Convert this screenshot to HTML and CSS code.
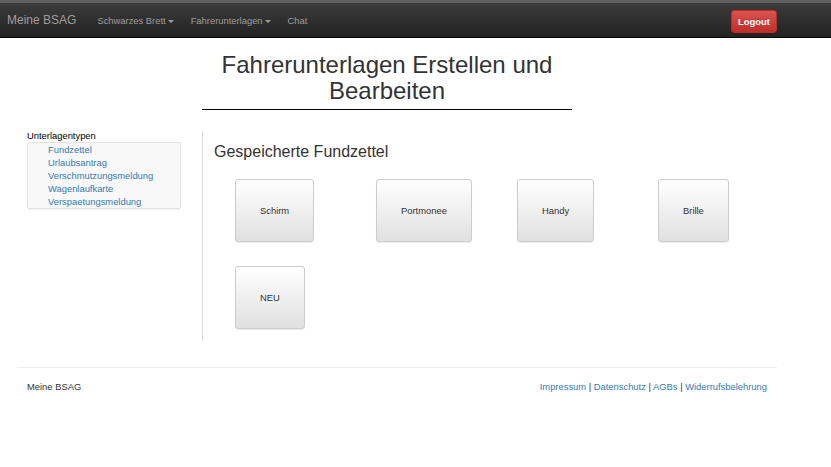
FILE: index.html
```html
<!DOCTYPE html>
<html lang="de">
<head>
<meta charset="utf-8">
<title>Fahrerunterlagen</title>
<link rel="stylesheet" href="styles.css">
</head>
<body>
<div class="topstrip"></div>
<nav class="navbar">
  <a class="brand" href="#">Meine BSAG</a>
  <ul class="nav">
    <li><a href="#">Schwarzes Brett<span class="caret"></span></a></li>
    <li><a href="#">Fahrerunterlagen<span class="caret"></span></a></li>
    <li><a href="#">Chat</a></li>
  </ul>
  <button class="logout">Logout</button>
</nav>
<div class="container">
  <div class="title-wrap">
    <h1 class="title">Fahrerunterlagen Erstellen und Bearbeiten</h1>
  </div>
  <div class="row">
    <aside class="sidebar">
      <div class="side-label">Unterlagentypen</div>
      <ul class="side-list">
        <li><a href="#">Fundzettel</a></li>
        <li><a href="#">Urlaubsantrag</a></li>
        <li><a href="#">Verschmutzungsmeldung</a></li>
        <li><a href="#">Wagenlaufkarte</a></li>
        <li><a href="#">Verspaetungsmeldung</a></li>
      </ul>
    </aside>
    <main class="main">
      <h3 class="subtitle">Gespeicherte Fundzettel</h3>
      <div class="grid">
        <div class="cell"><button class="item">Schirm</button></div>
        <div class="cell"><button class="item">Portmonee</button></div>
        <div class="cell"><button class="item">Handy</button></div>
        <div class="cell"><button class="item">Brille</button></div>
        <div class="cell"><button class="item">NEU</button></div>
      </div>
    </main>
  </div>
  <footer class="footer">
    <span class="foot-brand">Meine BSAG</span>
    <span class="foot-links"><a href="#">Impressum</a> | <a href="#">Datenschutz</a> | <a href="#">AGBs</a> | <a href="#">Widerrufsbelehrung</a></span>
  </footer>
</div>
</body>
</html>
```
FILE: styles.css
```css
* { box-sizing: border-box; }
html, body { margin: 0; padding: 0; }
body {
  font-family: "Liberation Sans", Arial, sans-serif;
  font-size: 9.4px;
  color: #333;
  background: #fff;
}
a { text-decoration: none; color: #337ab7; }

.topstrip { height: 3px; background: #5e5e5e; }
.navbar {
  height: 35px;
  display: flex;
  align-items: center;
  background: linear-gradient(to bottom, #3c3c3c 0%, #222 100%);
  border-bottom: 1px solid #080808;
  padding: 0 0 0 7px;
}
.brand {
  color: #9d9d9d;
  font-size: 12px;
  margin-right: 12.5px;
  margin-top: -1px;
}
.nav {
  list-style: none;
  margin: 0;
  padding: 0;
  display: flex;
  flex: 1;
}
.nav li a {
  display: block;
  color: #9d9d9d;
  font-size: 9.4px;
  padding: 0 8.5px;
}
.caret {
  display: inline-block;
  width: 0;
  height: 0;
  margin-left: 2px;
  vertical-align: middle;
  border-top: 3px solid #9d9d9d;
  border-left: 3px solid transparent;
  border-right: 3px solid transparent;
}
.logout {
  font-family: "Liberation Sans", Arial, sans-serif;
  font-size: 9.4px;
  font-weight: bold;
  color: #fff;
  background: linear-gradient(to bottom, #d9534f 0%, #c12e2a 100%);
  border: 1px solid #b92c28;
  border-radius: 3px;
  height: 23px;
  width: 46px;
  padding: 0;
  margin-right: 54px;
  text-shadow: 0 -1px 0 rgba(0,0,0,0.2);
  margin-top: 2px;
}

.container {
  width: 760px;
  margin-left: 17px;
}
.title-wrap {
  padding-left: 185px;
  padding-top: 14px;
}
.title {
  width: 370px;
  margin: 0;
  font-size: 24px;
  font-weight: normal;
  line-height: 26px;
  text-align: center;
  color: #333;
  border-bottom: 1px solid #000;
  padding-bottom: 5px;
}

.row {
  display: flex;
  margin-top: 21px;
}
.sidebar {
  width: 185px;
  padding-left: 10px;
  margin-top: -1px;
}
.side-label {
  font-size: 9.4px;
  color: #000;
  line-height: 11px;
}
.side-list {
  list-style: none;
  margin: 1px 0 0;
  padding: 0 0 0 20px;
  width: 154px;
  border: 1px solid #e3e3e3;
  border-radius: 2px;
  background: #f8f8f8;
  box-shadow: 0 1px 1px rgba(0,0,0,0.05);
}
.side-list li { line-height: 13px; font-size: 9.4px; }

.main {
  border-left: 1px solid #ddd;
  padding-left: 11px;
  width: 575px;
  padding-bottom: 12px;
}
.subtitle {
  margin: 12px 0 0;
  font-size: 16px;
  font-weight: normal;
  line-height: 18px;
  color: #333;
}
.grid {
  display: grid;
  grid-template-columns: repeat(4, 141px);
  row-gap: 24px;
  margin-top: 18px;
}
.cell { padding-left: 21px; }
.item {
  font-family: "Liberation Sans", Arial, sans-serif;
  font-size: 9.4px;
  color: #333;
  height: 63px;
  padding: 0 24px;
  background: linear-gradient(to bottom, #fff 0%, #e0e0e0 100%);
  border: 1px solid #ccc;
  border-radius: 3px;
  box-shadow: 0 1px 1px rgba(0,0,0,0.08);
}

.footer {
  margin-top: 26px;
  border-top: 1px solid #eee;
  display: flex;
  justify-content: space-between;
  padding: 12px 10px 0;
  line-height: 14px;
}
.foot-brand { color: #333; }
.foot-links { color: #333; }
```
